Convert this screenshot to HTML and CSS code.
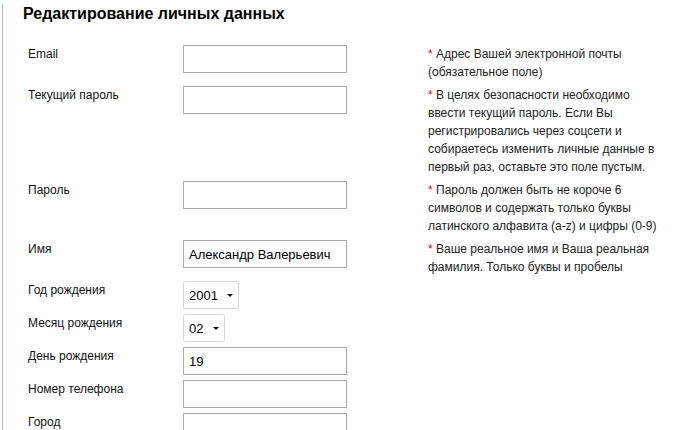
FILE: index.html
```html
<!DOCTYPE html>
<html lang="ru">
<head>
<meta charset="utf-8">
<title>Редактирование личных данных</title>
<link rel="stylesheet" href="styles.css">
</head>
<body>
<div class="page">
  <h1 class="title">Редактирование личных данных</h1>
  <form class="form">
    <div class="row">
      <label class="label">Email</label>
      <div class="field"><input class="input" type="text"></div>
      <div class="hint"><span class="star">*</span> Адрес Вашей электронной почты<br>(обязательное поле)</div>
    </div>
    <div class="row">
      <label class="label">Текущий пароль</label>
      <div class="field"><input class="input" type="password"></div>
      <div class="hint"><span class="star">*</span> В целях безопасности необходимо<br>ввести текущий пароль. Если Вы<br>регистрировались через соцсети и<br>собираетесь изменить личные данные в<br>первый раз, оставьте это поле пустым.</div>
    </div>
    <div class="row">
      <label class="label">Пароль</label>
      <div class="field"><input class="input" type="password"></div>
      <div class="hint"><span class="star">*</span> Пароль должен быть не короче 6<br>символов и содержать только буквы<br>латинского алфавита (a-z) и цифры (0-9)</div>
    </div>
    <div class="row">
      <label class="label">Имя</label>
      <div class="field"><input class="input" type="text" value="Александр Валерьевич"></div>
      <div class="hint"><span class="star">*</span> Ваше реальное имя и Ваша реальная<br>фамилия. Только буквы и пробелы</div>
    </div>
    <div class="row">
      <label class="label">Год рождения</label>
      <div class="field"><span class="select-wrap"><select class="select select-year"><option>2001</option></select></span></div>
    </div>
    <div class="row">
      <label class="label">Месяц рождения</label>
      <div class="field"><span class="select-wrap"><select class="select select-month"><option>02</option></select></span></div>
    </div>
    <div class="row">
      <label class="label">День рождения</label>
      <div class="field"><input class="input" type="text" value="19"></div>
    </div>
    <div class="row">
      <label class="label">Номер телефона</label>
      <div class="field"><input class="input" type="text"></div>
    </div>
    <div class="row">
      <label class="label">Город</label>
      <div class="field"><input class="input" type="text"></div>
    </div>
  </form>
</div>
</body>
</html>
```
FILE: styles.css
```css
html, body {
  margin: 0;
  padding: 0;
  background: #ffffff;
  overflow: hidden;
}
body {
  font-family: "Liberation Sans", Arial, sans-serif;
  color: #111;
}
.page {
  margin-left: 2px;
  border-left: 1px solid #9ccf9c;
  padding-left: 20px;
  min-height: 430px;
}
.title {
  margin: 4px 0 0;
  font-size: 16px;
  line-height: 19px;
  font-weight: bold;
  color: #000;
}
.form {
  margin-top: 22px;
  padding-left: 5px;
  display: flex;
  flex-direction: column;
  gap: 5px;
}
.row {
  display: flex;
  align-items: flex-start;
}
.label {
  width: 155px;
  flex: none;
  font-size: 12px;
  line-height: 18px;
  color: #111;
}
.field {
  width: 164px;
  flex: none;
  display: flex;
}
.input {
  box-sizing: border-box;
  width: 164px;
  height: 28px;
  margin: 0;
  border: 1px solid #a9a9a9;
  border-radius: 0;
  padding: 0 5px;
  font-family: "Liberation Sans", Arial, sans-serif;
  font-size: 13px;
  color: #000;
  background: #fff;
  outline: none;
}
.hint {
  margin-left: 81px;
  width: 260px;
  flex: none;
  font-family: "Liberation Sans", Arial, sans-serif;
  font-size: 12px;
  line-height: 18px;
  color: #222;
  white-space: nowrap;
}
.star {
  color: #d01010;
}
.select-wrap {
  position: relative;
  display: inline-block;
}
.select-wrap::after {
  content: "";
  position: absolute;
  right: 6px;
  top: 13px;
  border-left: 3px solid transparent;
  border-right: 3px solid transparent;
  border-top: 3px solid #111;
  pointer-events: none;
}
.select {
  -webkit-appearance: none;
  appearance: none;
  box-sizing: border-box;
  height: 28px;
  margin: 0;
  border: 1px solid #d6d6d6;
  border-radius: 2px;
  padding: 0 18px 0 5px;
  font-family: "Liberation Sans", Arial, sans-serif;
  font-size: 13px;
  color: #000;
  background: #fff;
  outline: none;
}
.select-year {
  width: 56px;
}
.select-month {
  width: 42px;
}
```
